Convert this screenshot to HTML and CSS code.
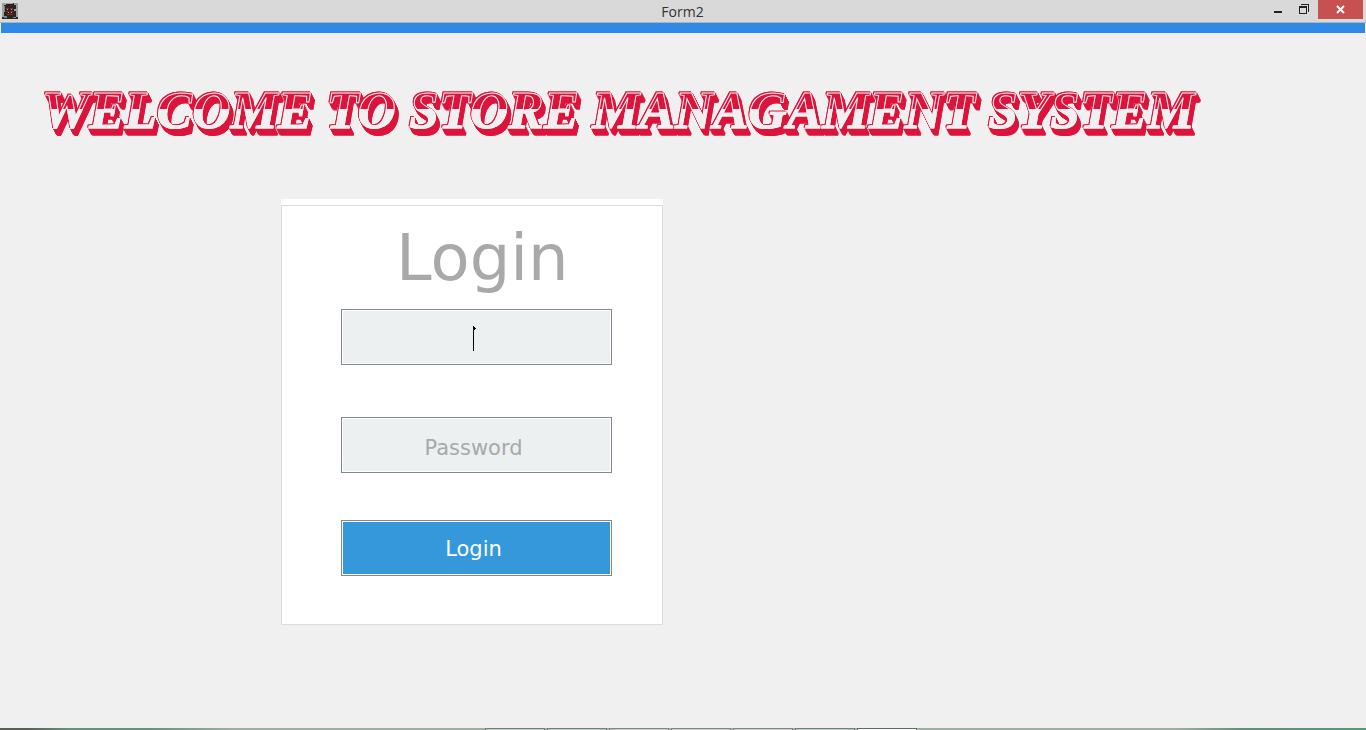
FILE: index.html
```
<!DOCTYPE html>
<html lang="en">
<head>
    <meta charset="UTF-8">
    <meta name="viewport" content="width=device-width, initial-scale=1.0">
    <title>Form2</title>
    <link rel="stylesheet" href="styles.css">
</head>
<body>

<header class="titlebar">
    <svg class="app-icon" viewBox="0 0 16 16" shape-rendering="crispEdges" aria-hidden="true">
        <rect width="16" height="16" fill="#2b2522"/>
        <path fill="#9da3a1" d="M0 0h4v2H2v12H0zM4 0h7v1H4zM12 0h4v2h-4zM14 2h2v12h-2zM12 6h2v2h-2z"/>
        <path fill="#7d8a8c" d="M2 13h3v2H2zM11 14h3v1h-3zM2 3h1v6H2z"/>
        <path fill="#a31f28" d="M4 5h3v1H4zM8 5h3v1H8zM4 8h2v1H4zM8 8h3v1H8zM5 11h6v1H5z"/>
        <path fill="#d0a860" d="M5 6h1v1H5zM9 6h1v1H9zM6 9h1v1H6zM9 9h1v1H9z"/>
    </svg>
    <span class="window-title">Form2</span>
    <div class="window-buttons">
        <button type="button" aria-label="Minimize">
            <svg width="26" height="19" shape-rendering="crispEdges"><path fill="#222" d="M8 11h8v2H8z"/></svg>
        </button>
        <button type="button" aria-label="Restore">
            <svg width="26" height="19" shape-rendering="crispEdges"><path fill="#222" fill-rule="evenodd" d="M7 6h8v8H7zM8 8v5h6V8zM9 4h8v8h-1V5H9z"/></svg>
        </button>
        <button type="button" class="close" aria-label="Close">
            <svg width="45" height="19"><path stroke="#fff" stroke-width="2" d="M19 6l7 7M26 6l-7 7"/></svg>
        </button>
    </div>
</header>
<div class="top-strip"></div>

<main>
    <h1>WELCOME TO STORE MANAGAMENT SYSTEM</h1>

    <form class="login-box">
        <h2>Login</h2>
        <div class="field">
            <input type="text" aria-label="Username">
            <svg class="caret" width="3" height="25" shape-rendering="crispEdges" aria-hidden="true"><path d="M0 0h1v1h1v1h1v1H2v1H1v21H0z"/></svg>
        </div>
        <div class="field">
            <input type="password" aria-label="Password" placeholder="Password">
        </div>
        <button type="button" class="login-button">Login</button>
    </form>
</main>

<!-- top edge of the taskbar -->
<footer class="taskbar">
    <span></span><span></span><span class="grey"></span><span class="grey"></span><span class="grey"></span><span></span><span class="active"></span>
</footer>

</body>
</html>
```
FILE: styles.css
```
* {
    box-sizing: border-box;
}
body {
    margin: 0;
    min-height: 100vh;
    display: flex;
    flex-direction: column;
    background-color: #f0f0f0;
    font-family: "DejaVu Sans", Verdana, sans-serif;
}
.titlebar {
    display: grid;
    grid-template-columns: 1fr auto 1fr;
    height: 23px;
    padding: 0 3px 0 2px;
    background: #d9d9d9;
    border-bottom: 1px solid #b4b4b4;
}
.app-icon {
    width: 16px;
    height: 16px;
    margin-top: 3px;
}
.window-title {
    font-family: "Open Sans", "Segoe UI", sans-serif;
    font-size: 14px;
    line-height: 23px;
    color: #333;
}
.window-buttons {
    display: flex;
    justify-content: flex-end;
}
.window-buttons button {
    height: 19px;
    padding: 0;
    border: none;
    background: none;
}
.window-buttons svg {
    display: block;
}
.window-buttons .close {
    background: #c75050;
}
.top-strip {
    height: 10px;
    margin: 0 1px;
    background: #2e8ae6;
}
main {
    flex: 1;
}
h1 {
    width: fit-content;
    margin: 45px 0 0 42px;
    padding-right: 8px;
    font-family: "Liberation Serif", "Times New Roman", serif;
    font-size: 53px;
    font-style: italic;
    line-height: 64px;
    white-space: nowrap;
    color: transparent;
    background: linear-gradient(#dc143c 48%, #f0f0f0 48%);
    -webkit-background-clip: text;
    background-clip: text;
    -webkit-text-stroke: 1px #f0f0f0;
    /* block shadow behind the letters */
    filter: drop-shadow(-1px -1px 0 #dc143c) drop-shadow(1px 1px 0 #dc143c) drop-shadow(1px 2px 0 #dc143c) drop-shadow(2px 4px 0 #dc143c);
}
.login-box {
    width: 382px;
    margin: 63px 0 0 281px;
    padding: 15px 50px 48px 59px;
    background: white;
    border: 1px solid #dcdcdc;
    box-shadow: 0 -6px 0 white;
}
h2 {
    margin: 0 0 13px 55px;
    font-size: 64px;
    font-weight: normal;
    line-height: 75px;
    color: #a9a9a9;
}
.field {
    position: relative;
    margin-bottom: 52px;
}
.field + .login-button {
    margin-top: -5px;
}
.field input,
.login-button {
    display: block;
    width: 100%;
    height: 56px;
    padding: 6px 6px 0 0;
    border: 1px solid #828790;
    border-radius: 0;
    box-shadow: inset 0 0 0 1px white;
    font-family: inherit;
    font-size: 21px;
    text-align: center;
    background: #ecf0f1;
}
.field input::placeholder {
    color: #a9a9a9;
    opacity: 1;
}
.caret {
    position: absolute;
    top: 17px;
    left: 132px;
}
.login-button {
    padding-top: 2px;
    color: white;
    background: #3498db;
}
.taskbar {
    display: flex;
    justify-content: center;
    gap: 2px;
    height: 2px;
    padding-left: 36px;
    background: linear-gradient(to right, #5a5f55 2%, #62947d 5%, #62947d 11%, #9bb0a2 17%, #9bb0a2 86%, #5c917a 91%, #549a78);
}
.taskbar span {
    width: 60px;
    background: #b5cdc5;
    border: 1px solid #71827b;
    border-bottom: none;
}
.taskbar .grey {
    background: #c4cbc8;
    border-color: #858585;
}
.taskbar .active {
    background: white;
    border-color: #5d6b67;
}
```
